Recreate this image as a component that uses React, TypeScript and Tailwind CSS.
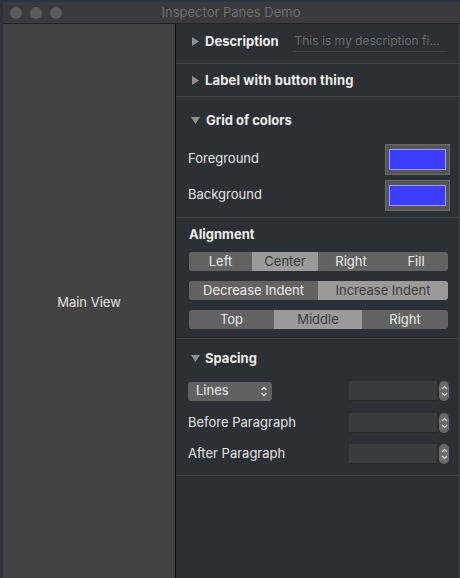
import React from "react";

const font = { fontFamily: "Inter, 'Liberation Sans', sans-serif" };

function Tri({ open }: { open?: boolean }) {
  return open ? (
    <svg width="9" height="8" viewBox="0 0 9 8" className="shrink-0">
      <path d="M0 0 L9 0 L4.5 7 Z" fill="#8e8e8e" />
    </svg>
  ) : (
    <svg width="8" height="9" viewBox="0 0 8 9" className="shrink-0">
      <path d="M0 0 L7 4.5 L0 9 Z" fill="#8e8e8e" />
    </svg>
  );
}

function Seg({ items }: { items: { label: string; on?: boolean; w: number }[] }) {
  return (
    <div className="flex h-[19px] w-[259px] rounded-[3px] overflow-hidden text-[13px] shrink-0">
      {items.map((it, i) => (
        <div
          key={i}
          style={{ width: it.w }}
          className={
            it.on
              ? "flex items-center justify-center bg-[#9a9a9a] text-[#3c3c3c]"
              : "flex items-center justify-center bg-[#626262] text-[#ececec]"
          }
        >
          {it.label}
        </div>
      ))}
    </div>
  );
}

function Stepper() {
  return (
    <div className="flex items-center gap-[2px] shrink-0">
      <div className="w-[88px] h-[20px] bg-[#393b3e] border-b border-[#2a2a2a]" />
      <div className="w-[10px] h-[20px] rounded-[5px] bg-[#6a6a6a] flex flex-col items-center justify-center">
        <svg width="7" height="14" viewBox="0 0 7 14">
          <path d="M1 5 L3.5 2.5 L6 5" stroke="#dcdcdc" strokeWidth="1.2" fill="none" />
          <path d="M1 9 L3.5 11.5 L6 9" stroke="#dcdcdc" strokeWidth="1.2" fill="none" />
        </svg>
      </div>
    </div>
  );
}

function Well() {
  return (
    <div className="w-[65px] h-[31px] bg-[#555555] border border-[#6a6a6a] flex items-center justify-center shrink-0">
      <div className="w-[57px] h-[21px] bg-[#3d3dff] border border-[#9a9aff]" />
    </div>
  );
}

export default function App() {
  return (
    <div className="w-[460px] h-[578px] bg-[#2d3240] flex flex-col overflow-hidden" style={font}>
      <div className="h-[2px] bg-[#2c3346] shrink-0" />
      <div className="flex-1 flex flex-col ml-[3px] bg-[#3a3a3c] min-h-0">
        <div className="h-[22px] shrink-0 relative flex items-center border-b border-[#232323]">
          <div className="flex gap-[8px] pl-[7px]">
            <div className="w-[12px] h-[12px] rounded-full bg-[#5b5b5b]" />
            <div className="w-[12px] h-[12px] rounded-full bg-[#5b5b5b]" />
            <div className="w-[12px] h-[12px] rounded-full bg-[#5b5b5b]" />
          </div>
          <div className="absolute inset-0 flex items-center justify-center text-[13px] text-[#6e6e6e] pr-[1px]">
            Inspector Panes Demo
          </div>
        </div>
        <div className="flex-1 flex min-h-0">
          <div className="w-[172px] shrink-0 bg-[#434343] flex items-center justify-center text-[13px] text-[#e4e4e4] pt-[3px]">
            Main View
          </div>
          <div className="w-px shrink-0 bg-[#0e0e0e]" />
          <div className="flex-1 min-w-0 bg-[#2c2f33] flex flex-col text-[13px] text-[#e6e6e6] border-r border-[#3e4146]">
            {/* Description */}
            <div className="h-[40px] flex items-center pl-[16px] pr-[12px] pb-[4px] border-b border-[#404347] shrink-0">
              <Tri />
              <span className="ml-[5px] font-bold text-[#eeeeee] shrink-0">Description</span>
              <div className="ml-[14px] flex-1 min-w-0 border-b border-[#3c3f44] pb-[1px] pl-[2px] text-[12px] text-[#6a6a6a] whitespace-nowrap">
                This is my description fi...
              </div>
            </div>
            {/* Label with button */}
            <div className="h-[33px] flex items-center pl-[16px] pt-[1px] border-b border-[#404347] shrink-0">
              <Tri />
              <span className="ml-[5px] font-bold text-[#eeeeee] tracking-[0.15px]">Label with button thing</span>
            </div>
            {/* Grid of colors */}
            <div className="h-[121px] flex flex-col pl-[12px] pr-[9px] border-b border-[#404347] shrink-0">
              <div className="h-[46px] flex items-center pt-[2px] pl-[3px]">
                <Tri open />
                <span className="ml-[6px] font-bold text-[#eeeeee]">Grid of colors</span>
              </div>
              <div className="flex items-center justify-between h-[32px]">
                <span>Foreground</span>
                <Well />
              </div>
              <div className="flex items-center justify-between h-[34px] mt-[3px]">
                <span>Background</span>
                <Well />
              </div>
            </div>
            {/* Alignment */}
            <div className="h-[121px] flex flex-col pl-[13px] border-b border-[#404347] shrink-0">
              <div className="h-[34px] flex items-center font-bold text-[#eeeeee] pb-[1px]">Alignment</div>
              <Seg
                items={[
                  { label: "Left", w: 63 },
                  { label: "Center", on: true, w: 66 },
                  { label: "Right", w: 66 },
                  { label: "Fill", w: 64 },
                ]}
              />
              <div className="h-[10px] shrink-0" />
              <Seg
                items={[
                  { label: "Decrease Indent", w: 129 },
                  { label: "Increase Indent", on: true, w: 130 },
                ]}
              />
              <div className="h-[10px] shrink-0" />
              <Seg
                items={[
                  { label: "Top", w: 85 },
                  { label: "Middle", on: true, w: 88 },
                  { label: "Right", w: 86 },
                ]}
              />
            </div>
            {/* Spacing */}
            <div className="h-[137px] flex flex-col pl-[12px] pr-[10px] border-b border-[#404347] shrink-0">
              <div className="h-[40px] flex items-center pl-[3px]">
                <Tri open />
                <span className="ml-[5px] font-bold text-[#eeeeee]">Spacing</span>
              </div>
              <div className="flex items-center justify-between h-[24px]">
                <div className="w-[84px] h-[19px] rounded-[3px] bg-[#616161] flex items-center justify-between pl-[8px] pr-[4px] text-[#ececec]">
                  <span>Lines</span>
                  <svg width="8" height="13" viewBox="0 0 8 13">
                    <path d="M1.5 5 L4 2.5 L6.5 5" stroke="#e0e0e0" strokeWidth="1.3" fill="none" />
                    <path d="M1.5 8 L4 10.5 L6.5 8" stroke="#e0e0e0" strokeWidth="1.3" fill="none" />
                  </svg>
                </div>
                <Stepper />
              </div>
              <div className="flex items-center justify-between h-[24px] mt-[8px]">
                <span>Before Paragraph</span>
                <Stepper />
              </div>
              <div className="flex items-center justify-between h-[24px] mt-[7px]">
                <span>After Paragraph</span>
                <Stepper />
              </div>
            </div>
            <div className="flex-1" />
          </div>
        </div>
      </div>
    </div>
  );
}
